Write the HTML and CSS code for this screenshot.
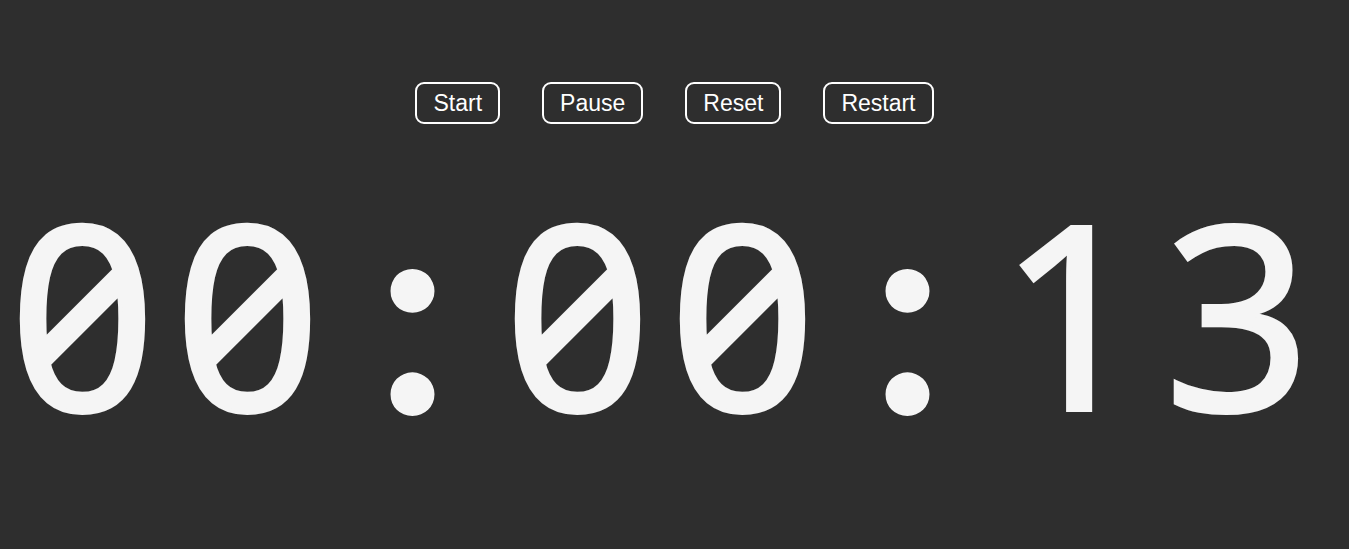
FILE: index.html
```html
<!DOCTYPE html>
<html>
<head><link rel="stylesheet" href="styles.css"></head>
<body>
<div class="controls">
  <button class="btn">Start</button>
  <button class="btn">Pause</button>
  <button class="btn">Reset</button>
  <button class="btn">Restart</button>
</div>
<div class="timer"><span class="ch">0</span><span class="ch">0</span><span class="ch sep">:</span><span class="ch">0</span><span class="ch">0</span><span class="ch sep">:</span><span class="ch">1</span><span class="ch">3</span></div>
</body>
</html>
```
FILE: styles.css
```css
html, body { margin: 0; background: #2e2e2e; }
body { height: 549px; overflow: hidden; }
.controls { display: flex; justify-content: center; gap: 42px; padding-top: 82px; }
.btn { font-family: "Liberation Sans", Arial, sans-serif; font-size: 23px; color: #fff; background: #2e2e2e; border: 2px solid #fff; border-radius: 9px; padding: 6px 16px; line-height: 26px; margin: 0; }
.timer { display: flex; margin-top: 50px; color: #f5f5f5; font-family: "Noto Sans", sans-serif; font-size: 256px; line-height: 273px; font-variant-numeric: slashed-zero tabular-nums; font-feature-settings: "zero" 1, "tnum" 1; -webkit-text-stroke: 4px #f5f5f5; }
.ch { width: 165px; text-align: center; }
.sep { font-family: "Lato", sans-serif; font-weight: 700; font-size: 290px; line-height: 257px; -webkit-text-stroke: 0; }
```
